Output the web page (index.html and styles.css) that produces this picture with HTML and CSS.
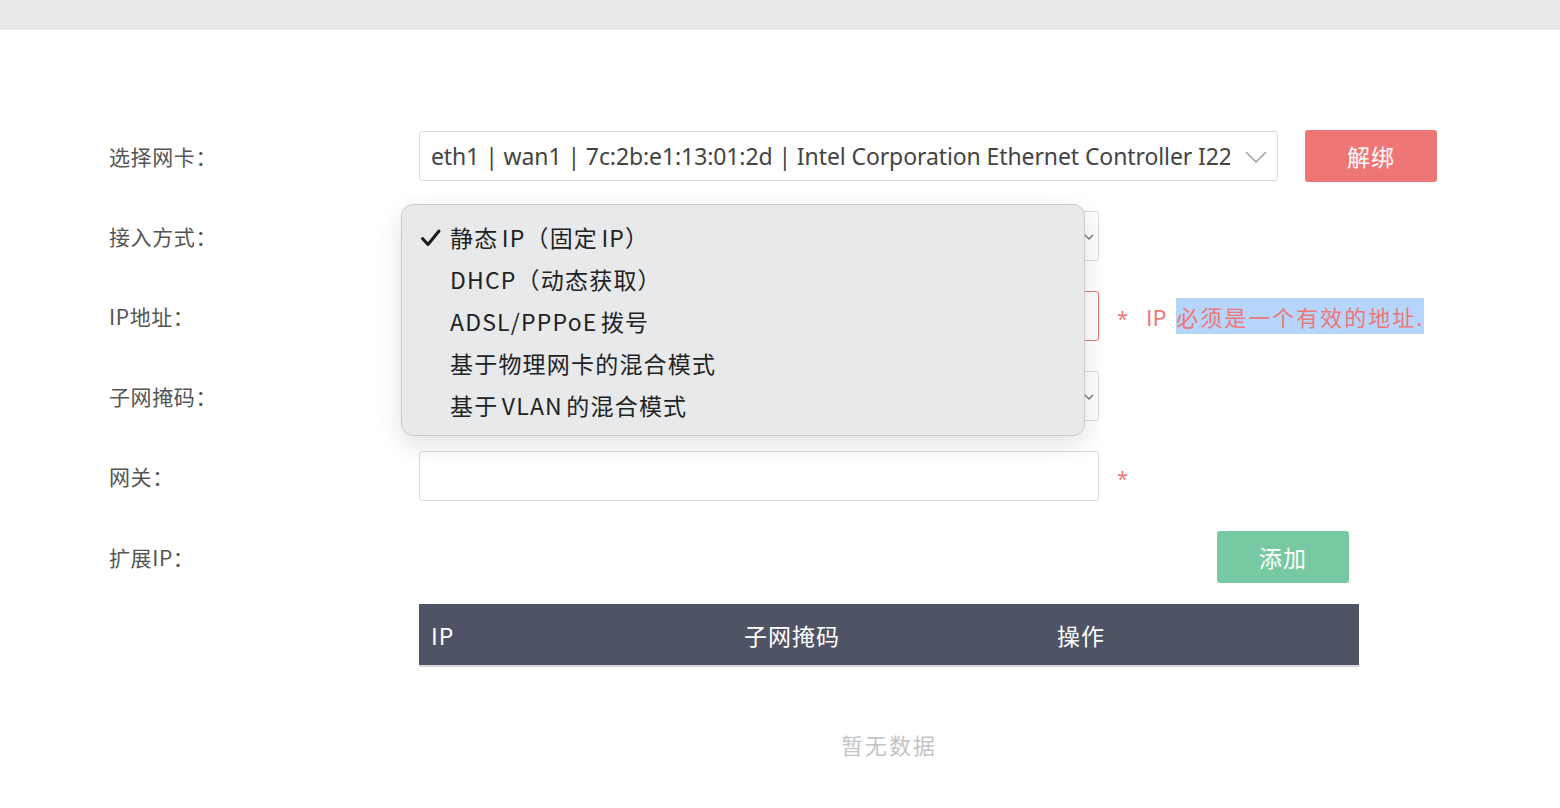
FILE: index.html
```html
<!DOCTYPE html>
<html lang="zh">
<head>
<meta charset="utf-8">
<link rel="stylesheet" href="styles.css">
</head>
<body>
<div class="topbar"></div>
<main class="page">
  <div class="form">
    <div class="row">
      <label class="label">选择网卡：</label>
      <div class="control">
        <div class="select wide">
          <span class="value">eth1 | wan1 | 7c:2b:e1:13:01:2d | Intel Corporation Ethernet Controller I225-V</span>
          <svg class="chev" width="22" height="12" viewBox="0 0 22 12"><path d="M1 1l10 10L21 1" fill="none" stroke="#999" stroke-width="1.4"/></svg>
        </div>
        <button class="btn red">解绑</button>
      </div>
    </div>
    <div class="row">
      <label class="label">接入方式：</label>
      <div class="control anchor">
        <div class="select">
          <svg class="chev small" width="10" height="8" viewBox="0 0 10 8"><path d="M1 2l4 4 4-4" fill="none" stroke="#777" stroke-width="1.4"/></svg>
        </div>
        <ul class="menu">
          <li class="item checked"><svg class="check" width="22" height="20" viewBox="0 0 22 20"><path d="M2.5 10.5l5.5 6L19 3" fill="none" stroke="#1a1a1a" stroke-width="3" stroke-linecap="round" stroke-linejoin="round"/></svg>静态 IP（固定 IP）</li>
          <li class="item">DHCP（动态获取）</li>
          <li class="item">ADSL/PPPoE 拨号</li>
          <li class="item">基于物理网卡的混合模式</li>
          <li class="item">基于 VLAN 的混合模式</li>
        </ul>
      </div>
    </div>
    <div class="row">
      <label class="label">IP地址：</label>
      <div class="control">
        <div class="input error"></div>
        <span class="req">*</span>
        <span class="err">IP <span class="sel">必须是一个有效的地址.</span></span>
      </div>
    </div>
    <div class="row">
      <label class="label">子网掩码：</label>
      <div class="control">
        <div class="select">
          <svg class="chev small" width="10" height="8" viewBox="0 0 10 8"><path d="M1 2l4 4 4-4" fill="none" stroke="#777" stroke-width="1.4"/></svg>
        </div>
      </div>
    </div>
    <div class="row">
      <label class="label">网关：</label>
      <div class="control">
        <div class="input"></div>
        <span class="req">*</span>
      </div>
    </div>
    <div class="row ext">
      <label class="label">扩展IP：</label>
      <div class="control end">
        <button class="btn green">添加</button>
      </div>
    </div>
  </div>
  <div class="tablewrap">
    <div class="thead">
      <div class="th">IP</div>
      <div class="th">子网掩码</div>
      <div class="th">操作</div>
    </div>
    <div class="empty">暂无数据</div>
  </div>
</main>
</body>
</html>
```

FILE: styles.css
```css
* { box-sizing: border-box; }
html, body { margin: 0; padding: 0; background: #fff; }
body {
  font-family: "Noto Sans", "Noto Sans CJK SC", sans-serif;
  color: #555;
  width: 1560px;
  height: 808px;
  overflow: hidden;
}
.topbar { height: 30px; background: #e8e8e8; }
.page { padding: 101px 0 0 109px; }
.form { display: flex; flex-direction: column; gap: 30px; }
.row { display: flex; align-items: center; height: 50px; }
.row.ext { height: 52px; }
.label {
  width: 310px;
  font-size: 21px;
  color: #555;
  letter-spacing: 0.6px;
  font-family: "Noto Sans CJK SC", sans-serif;
}
.control { display: flex; align-items: center; position: relative; }
.control.end { width: 930px; justify-content: flex-end; }
.select, .input {
  width: 680px;
  height: 50px;
  border: 1px solid #dcdcdc;
  border-radius: 3px;
  background: #fff;
  display: flex;
  align-items: center;
  padding: 0 11px;
  position: relative;
}
.select.wide { width: 859px; }
.value {
  font-size: 23px;
  color: #444;
  white-space: nowrap;
  overflow: hidden;
  width: 799px;
  font-family: "Noto Sans", "Noto Sans CJK SC", sans-serif;
  letter-spacing: -0.1px;
}
.chev { position: absolute; right: 10px; top: 19px; }
.chev.small { right: 4px; top: 21px; }
.input.error { border-color: #e87070; }
.btn {
  border: none;
  border-radius: 3px;
  color: #fff;
  font-size: 23px;
  letter-spacing: 1px;
  font-family: "Noto Sans CJK SC", sans-serif;
  width: 132px;
  height: 52px;
  padding: 0;
}
.btn.red { background: #ef7676; margin-left: 27px; }
.btn.green { background: #76c9a0; width: 132px; }
.req {
  color: #ef7676;
  font-size: 20px;
  margin-left: 18px;
  margin-top: 4px;
}
.err {
  color: #ef7676;
  font-size: 22px;
  margin-left: 18px;
  font-family: "Noto Sans CJK SC", sans-serif;
}
.sel { background: #b6d5fa; padding: 2px 0; letter-spacing: 2px; margin-left: 5px; }
.menu {
  position: absolute;
  left: -18px;
  top: -7px;
  width: 684px;
  height: 232px;
  margin: 0;
  padding: 11px 0 0 0;
  list-style: none;
  background: #e8e9eb;
  border: 1px solid #cbcbcb;
  border-radius: 12px;
  box-shadow: 0 8px 26px rgba(0,0,0,0.12);
  z-index: 5;
}
.item {
  height: 42px;
  line-height: 42px;
  padding-left: 48px;
  font-size: 23px;
  color: #222;
  font-family: "Noto Sans CJK SC", sans-serif;
  position: relative;
  letter-spacing: 1.2px;
  word-spacing: -3px;
}
.check {
  position: absolute;
  left: 18px;
  top: 12px;
}
.tablewrap { margin: 21px 0 0 310px; width: 940px; }
.thead {
  display: grid;
  grid-template-columns: 313px 313px 314px;
  height: 63px;
  background: #4f5366;
  border-bottom: 2px solid #d9d9d9;
  align-items: center;
}
.th {
  color: #fff;
  font-size: 23px;
  letter-spacing: 1px;
  padding-left: 12px;
  font-family: "Noto Sans CJK SC", sans-serif;
}
.empty {
  text-align: center;
  color: #c4c4c4;
  font-size: 22px;
  letter-spacing: 2px;
  padding-top: 61px;
  font-family: "Noto Sans CJK SC", sans-serif;
}
```
